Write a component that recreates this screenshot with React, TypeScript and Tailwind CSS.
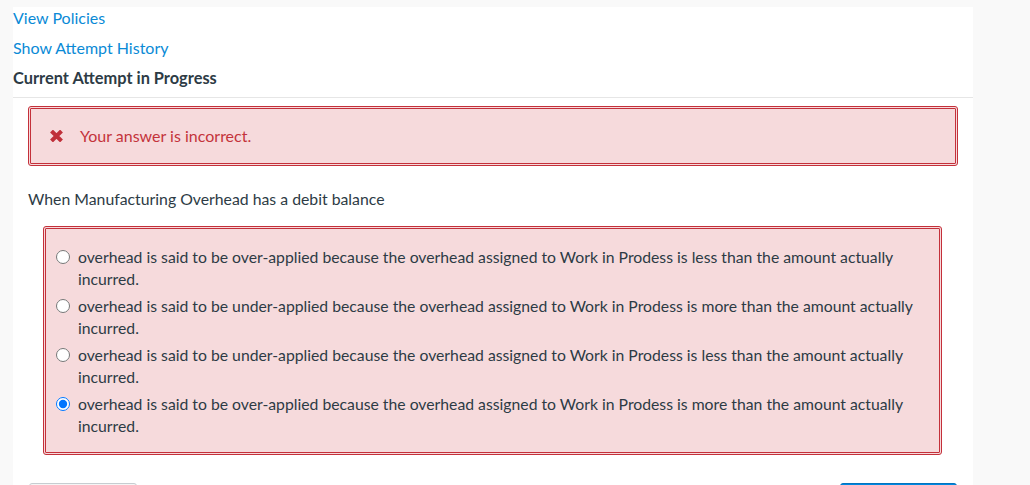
import React from "react";

const options = [
  "overhead is said to be over-applied because the overhead assigned to Work in Prodess is less than the amount actually incurred.",
  "overhead is said to be under-applied because the overhead assigned to Work in Prodess is more than the amount actually incurred.",
  "overhead is said to be under-applied because the overhead assigned to Work in Prodess is less than the amount actually incurred.",
  "overhead is said to be over-applied because the overhead assigned to Work in Prodess is more than the amount actually incurred.",
];

function CrossIcon() {
  return (
    <svg width="13" height="12" viewBox="0 0 13 12" className="shrink-0">
      <path
        d="M1.5 1 L11.5 11 M11.5 1 L1.5 11"
        stroke="#c0303a"
        strokeWidth="4"
        fill="none"
      />
    </svg>
  );
}

export default function App() {
  return (
    <div className="flex min-h-screen bg-[#f9f9f9] pl-[13px] pt-[7px] font-['Lato','Liberation_Sans',sans-serif] text-[16px] text-[#2d3b45]">
      <div className="w-[960px] bg-white">
        <div className="flex flex-col gap-2 leading-[22px]">
          <a href="#" className="self-start text-[#0a8ad6]">
            View Policies
          </a>
          <a href="#" className="self-start text-[#0a8ad6]">
            Show Attempt History
          </a>
          <h3 className="text-[16.4px] font-bold">Current Attempt in Progress</h3>
        </div>
        <hr className="mt-2 border-t border-[#e6e6e6]" />

        <div className="mx-[15px] mt-2 flex h-[60px] items-center gap-[17px] rounded-[3px] border-[3px] border-double border-[#c4303a] bg-[#f6dadc] pl-[19px]">
          <CrossIcon />
          <span className="text-[#c4333b]">Your answer is incorrect.</span>
        </div>

        <p className="mx-[15px] mt-[22px] text-[15.8px] leading-[22px]">
          When Manufacturing Overhead has a debit balance
        </p>

        <div className="ml-[30px] mr-[31px] mt-4 flex flex-col gap-[5px] rounded-[3px] border-[3px] border-double border-[#c4303a] bg-[#f6dadc] pb-[15px] pl-[10px] pr-6 pt-[17px] text-[15.75px]">
          {options.map((text, i) => (
            <label key={i} className="flex items-start gap-[8px] leading-[22px]">
              <input
                type="radio"
                name="answer"
                defaultChecked={i === 3}
                className="m-0 mt-[4px] h-[14px] w-[14px] shrink-0"
              />
              <span>{text}</span>
            </label>
          ))}
        </div>

        <div className="mx-[16px] mt-[28px] flex justify-between">
          <button
            aria-label="Previous"
            className="h-[36px] w-[108px] rounded-[3px] border border-[#c7cdd1] bg-[#f5f5f5]"
          />
          <button
            aria-label="Next"
            className="h-[36px] w-[117px] rounded-[3px] border border-[#0374c0] bg-[#0088e0]"
          />
        </div>
      </div>
    </div>
  );
}
